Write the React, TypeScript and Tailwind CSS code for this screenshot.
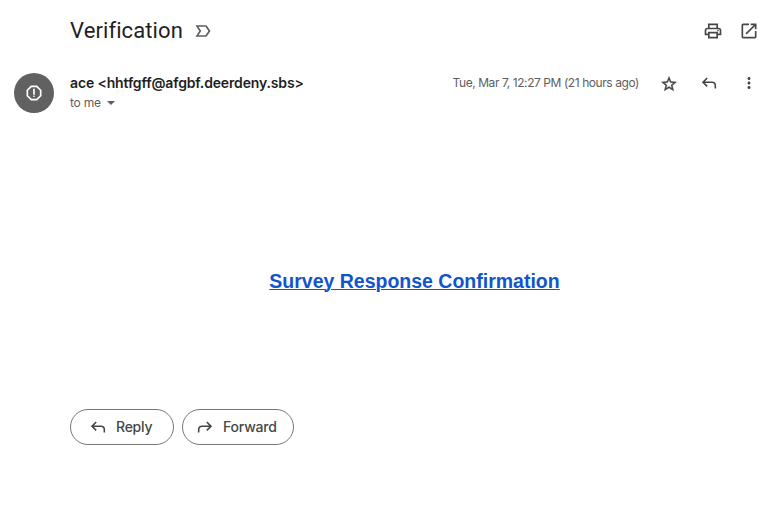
import type { ReactNode } from "react";

function Icon({ d, className = "", symbol = false }: { d: string; className?: string; symbol?: boolean }) {
  return (
    <svg viewBox={symbol ? "0 -960 960 960" : "0 0 24 24"} fill="currentColor" className={`size-5 shrink-0 ${className}`} aria-hidden="true">
      <path d={d} />
    </svg>
  );
}

const icons = {
  important:
    "M15 19H3l4.5-7L3 5h12c.65 0 1.26.31 1.63.84L21 12l-4.37 6.16c-.37.52-.98.84-1.63.84zm-8.5-2H15l3.5-5L15 7H6.5l3.5 5-3.5 5z",
  print:
    "M19 8h-1V3H6v5H5c-1.66 0-3 1.34-3 3v6h4v4h12v-4h4v-6c0-1.66-1.34-3-3-3zM8 5h8v3H8V5zm8 12v2H8v-4h8v2zm2-2v-2H6v2H4v-4c0-.55.45-1 1-1h14c.55 0 1 .45 1 1v4h-2zM19 11.5a1 1 0 1 1-2 0 1 1 0 0 1 2 0z",
  open: "M19 19H5V5h7V3H5c-1.11 0-2 .9-2 2v14c0 1.1.89 2 2 2h14c1.1 0 2-.9 2-2v-7h-2v7zM14 3v2h3.59l-9.83 9.83 1.41 1.41L19 6.41V10h2V3h-7z",
  star: "M22 9.24l-7.19-.62L12 2 9.19 8.63 2 9.24l5.46 4.73L5.82 21 12 17.27 18.18 21l-1.63-7.03L22 9.24zM12 15.4l-3.76 2.27 1-4.28-3.32-2.88 4.38-.38L12 6.1l1.71 4.04 4.38.38-3.32 2.88 1 4.28L12 15.4z",
  reply:
    "M760-200v-160q0-50-35-85t-85-35H273l144 144-57 56-240-240 240-240 57 56-144 144h367q83 0 141.5 58.5T840-360v160h-80Z",
  more: "M12 8c1.1 0 2-.9 2-2s-.9-2-2-2-2 .9-2 2 .9 2 2 2zm0 2c-1.1 0-2 .9-2 2s.9 2 2 2 2-.9 2-2-.9-2-2-2zm0 6c-1.1 0-2 .9-2 2s.9 2 2 2 2-.9 2-2-.9-2-2-2z",
  report:
    "M15.73 3H8.27L3 8.27v7.46L8.27 21h7.46L21 15.73V8.27L15.73 3zM19 14.9L14.9 19H9.1L5 14.9V9.1L9.1 5h5.8L19 9.1v5.8zM11 7h2v7h-2zM13 16a1 1 0 1 1-2 0 1 1 0 0 1 2 0z",
};

function ActionButton({ className, children }: { className: string; children: ReactNode }) {
  return (
    <button className={`flex h-9 items-center rounded-full border border-[#747775] text-sm font-medium text-[#444746] ${className}`}>
      {children}
    </button>
  );
}

export default function App() {
  return (
    <main className="flex h-[513px] w-[769px] flex-col overflow-hidden bg-white font-['Inter',sans-serif] text-[#1f1f1f]">
      <header className="flex h-[62px] items-center pr-[10px] pl-[70px] text-[#444746]">
        <h1 className="w-[123px] font-['Roboto',sans-serif] text-[22px] leading-7 tracking-[0.1px] whitespace-nowrap text-[#1f1f1f]">Verification</h1>
        <Icon d={icons.important} className="text-[#5e5e5e]" />
        <div className="ml-auto flex gap-4">
          <Icon d={icons.print} />
          <Icon d={icons.open} />
        </div>
      </header>

      <section className="flex h-[60px] items-start pt-[11px] pr-[10px] pl-[14px]">
        <div className="flex size-10 shrink-0 items-center justify-center rounded-full bg-[#616161] text-white">
          <Icon d={icons.report} />
        </div>
        <div className="ml-4">
          <div className="h-5 text-sm leading-5 font-semibold tracking-[-0.15px] whitespace-nowrap">ace &lt;hhtfgff@afgbf.deerdeny.sbs&gt;</div>
          <div className="flex h-5 items-center text-xs text-[#5e5e5e]">
            <span className="w-[31px] tracking-[-0.2px] whitespace-nowrap">to me</span>
            <span className="ml-1.5 border-x-4 border-t-4 border-x-transparent border-t-[#5e5e5e]" />
          </div>
        </div>
        <div className="ml-auto flex h-5 items-center text-[#444746]">
          <span className="mr-5 text-xs tracking-[-0.43px] whitespace-nowrap text-[#5e5e5e]">Tue, Mar 7, 12:27 PM (21 hours ago)</span>
          <div className="flex gap-5">
            <Icon d={icons.star} className="mt-px stroke-current stroke-[0.6] p-px" />
            <Icon d={icons.reply} symbol className="p-[0.5px]" />
            <Icon d={icons.more} className="p-px" />
          </div>
        </div>
      </section>

      <section className="flex h-[287px] justify-center pt-[147px] pl-[60px]">
        <a className="h-6 font-['Liberation_Sans',Arial,sans-serif] text-[19.5px] leading-6 font-bold text-[#1155cc] underline decoration-1">
          Survey Response Confirmation
        </a>
      </section>

      <footer className="flex gap-2 pl-[70px]">
        <ActionButton className="w-[104px] pl-[17px]">
          <Icon d={icons.reply} symbol className="p-[0.5px]" />
          <span className="ml-2 tracking-[-0.25px]">Reply</span>
        </ActionButton>
        <ActionButton className="w-[112px] pl-3">
          <Icon d={icons.reply} symbol className="-scale-x-100 p-[0.5px]" />
          <span className="ml-2 tracking-[-0.2px]">Forward</span>
        </ActionButton>
      </footer>
    </main>
  );
}
